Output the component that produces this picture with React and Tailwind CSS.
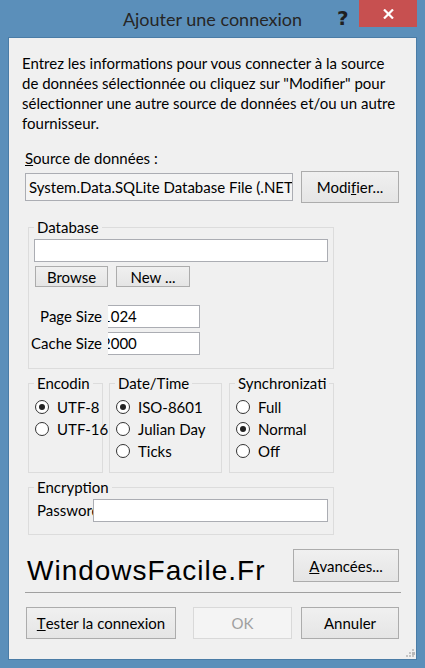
import React from 'react';

const Btn = ({ className = '', disabled = false, children }) => (
  <div
    className={`flex items-center justify-center border leading-[20px] ${
      disabled
        ? 'border-[#d9d9d9] bg-[#f4f4f4] text-[#a0a0a0]'
        : 'border-[#acacac] bg-linear-to-b from-[#f0f0f0] to-[#e5e5e5] text-black'
    } ${className}`}
  >
    {children}
  </div>
);

const Radio = ({ checked, label }) => (
  <div className="flex items-center h-[22px]">
    <div className="shrink-0 w-[14px] h-[14px] rounded-full border border-[#333333] bg-white flex items-center justify-center">
      {checked && <div className="w-[6px] h-[6px] rounded-full bg-[#222222]"></div>}
    </div>
    <span className="ml-[8px] whitespace-nowrap">{label}</span>
  </div>
);

const App = () => {
  return (
    <div className="w-[425px] h-[668px] bg-[#5b8fba] flex flex-col font-['Lato',sans-serif] text-[15px] text-black">
      {/* Title bar */}
      <div className="relative h-[37px] flex items-center justify-center pt-[2px]">
        <span className="text-[18px] text-[#262626]">Ajouter une connexion</span>
        <span className="absolute left-[337px] top-[3px] text-[20px] font-bold text-[#1f1f1f] font-['DejaVu_Sans',sans-serif]">?</span>
        <div className="absolute left-[359px] top-0 w-[58px] h-[27px] bg-[#c75050] flex items-center justify-center">
          <svg width="11" height="10" viewBox="0 0 11 10">
            <path d="M1 0.5 L10 9.5 M10 0.5 L1 9.5" stroke="white" strokeWidth="2.2" />
          </svg>
        </div>
      </div>

      {/* Client area */}
      <div className="relative flex-1 mx-[8px] mb-[8px] border border-[#4a7ca6] bg-[#f0f0f0] pl-[16px] pr-[17px] flex flex-col">
        <p className="mt-[15px] -ml-[3px] leading-[20px] whitespace-nowrap">
          Entrez les informations pour vous connecter à la source
          <br />
          de données sélectionnée ou cliquez sur "Modifier" pour
          <br />
          sélectionner une autre source de données et/ou un autre
          <br />
          fournisseur.
        </p>

        <div className="mt-[15px] leading-[20px]">
          <span className="underline">S</span>ource de données :
        </div>

        <div className="mt-[3px] flex items-center">
          <div className="w-[268px] h-[28px] border border-[#abadb3] bg-[#f4f4f4] pl-[3px] flex items-center overflow-hidden whitespace-nowrap">
            System.Data.SQLite Database File (.NET Framework Data Provider for SQLite)
          </div>
          <Btn className="ml-auto w-[98px] h-[32px]">
            Modi<span className="underline">f</span>ier...
          </Btn>
        </div>

        {/* Database group */}
        <fieldset className="mt-[14px] ml-[3px] w-[306px] min-w-0 border border-[#dcdcdc] px-[5px] pb-[13px]">
          <legend className="px-[3px] leading-[20px]">Database</legend>
          <div className="mt-[2px] h-[23px] border border-[#abadb3] bg-white"></div>
          <div className="mt-[4px] flex">
            <Btn className="ml-[1px] w-[73px] h-[21px]">Browse</Btn>
            <Btn className="ml-[8px] w-[74px] h-[21px]">New ...</Btn>
          </div>
          <div className="mt-[18px] flex items-center">
            <div className="relative z-10 w-[74px] h-[23px] bg-[#f0f0f0] pr-[6px] flex items-center justify-end whitespace-nowrap">
              Page Size
            </div>
            <div className="-ml-[8px] w-[100px] h-[23px] border border-[#abadb3] bg-white pl-[1px] flex items-center">
              1024
            </div>
          </div>
          <div className="mt-[4px] flex items-center">
            <div className="relative z-10 w-[74px] h-[23px] bg-[#f0f0f0] pr-[6px] flex items-center justify-end whitespace-nowrap">
              Cache Size
            </div>
            <div className="-ml-[8px] w-[100px] h-[23px] border border-[#abadb3] bg-white pl-[1px] flex items-center">
              2000
            </div>
          </div>
        </fieldset>

        {/* Radio groups */}
        <div className="mt-[4px] ml-[3px] flex">
          <fieldset className="shrink-0 w-[75px] min-w-0 border border-[#dcdcdc] pl-[6px] pb-[10px]">
            <legend className="-ml-[1px] px-[3px] leading-[20px] whitespace-nowrap">Encodin</legend>
            <div className="mt-[3px]">
              <Radio checked label="UTF-8" />
              <Radio label="UTF-16" />
            </div>
          </fieldset>
          <fieldset className="shrink-0 ml-[6px] w-[113px] min-w-0 border border-[#dcdcdc] pl-[6px] pb-[10px]">
            <legend className="-ml-[1px] px-[3px] leading-[20px] whitespace-nowrap">Date/Time</legend>
            <div className="mt-[3px]">
              <Radio checked label="ISO-8601" />
              <Radio label="Julian Day" />
              <Radio label="Ticks" />
            </div>
          </fieldset>
          <fieldset className="shrink-0 ml-[7px] w-[105px] min-w-0 border border-[#dcdcdc] pl-[6px] pb-[10px]">
            <legend className="-ml-[1px] px-[3px] leading-[20px] whitespace-nowrap">Synchronizati</legend>
            <div className="mt-[3px]">
              <Radio label="Full" />
              <Radio checked label="Normal" />
              <Radio label="Off" />
            </div>
          </fieldset>
        </div>

        {/* Encryption group */}
        <fieldset className="mt-[4px] ml-[3px] w-[306px] min-w-0 border border-[#dcdcdc] px-[5px] pb-[12px]">
          <legend className="px-[3px] leading-[20px]">Encryption</legend>
          <div className="mt-[2px] flex items-center">
            <div className="ml-[3px] w-[56px] overflow-hidden whitespace-nowrap">Password</div>
            <div className="w-[235px] h-[23px] border border-[#abadb3] bg-white"></div>
          </div>
        </fieldset>

        <div className="mt-[14px] flex items-end">
          <span className="ml-[2px] text-[28px] leading-[22px] tracking-[1px] font-['Liberation_Sans',Arial,sans-serif]">
            WindowsFacile.Fr
          </span>
          <Btn className="ml-auto w-[106px] h-[33px]">
            <span className="underline">A</span>vancées...
          </Btn>
        </div>

        <div className="mt-[10px] -mr-[2px] h-px bg-[#a0a0a0]"></div>

        <div className="mt-[14px] flex">
          <Btn className="ml-[1px] w-[150px] h-[32px]">
            <span className="underline">T</span>ester la connexion
          </Btn>
          <Btn disabled className="ml-[17px] w-[99px] h-[32px]">OK</Btn>
          <Btn className="ml-auto w-[98px] h-[32px]">Annuler</Btn>
        </div>

        {/* Resize grip */}
        <svg className="absolute right-[1px] bottom-[1px]" width="9" height="9" viewBox="0 0 9 9">
          <rect x="6" y="0" width="2" height="2" fill="#c4c4c4" />
          <rect x="3" y="3" width="2" height="2" fill="#c4c4c4" />
          <rect x="6" y="3" width="3" height="3" fill="#b8b8b8" />
          <rect x="0" y="6" width="2" height="2" fill="#c4c4c4" />
          <rect x="3" y="6" width="2" height="2" fill="#c4c4c4" />
          <rect x="6" y="6" width="2" height="2" fill="#c4c4c4" />
        </svg>
      </div>
    </div>
  );
};

export default App;
